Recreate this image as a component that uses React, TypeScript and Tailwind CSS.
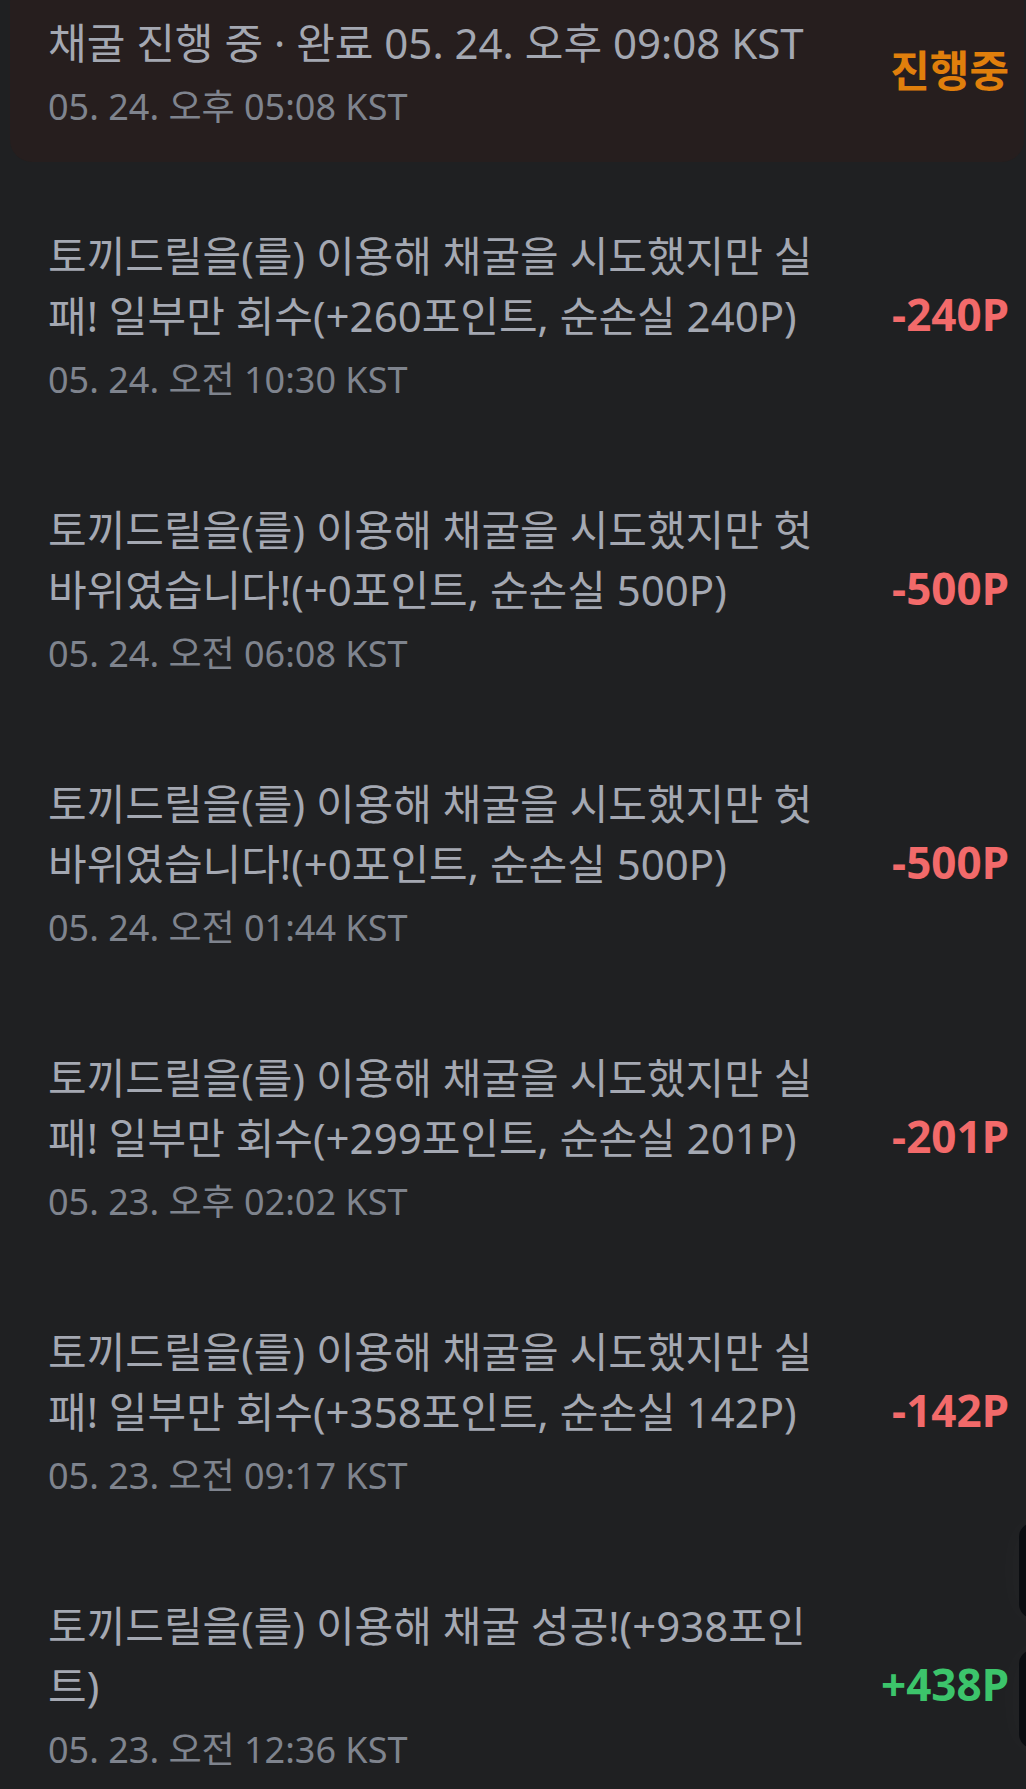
import React from 'react';

type Row = {
  id: number;
  text: string;
  date: string;
  amount: string;
  positive?: boolean;
};

const ROWS: Row[] = [
  { id: 1, text: '토끼드릴을(를) 이용해 채굴을 시도했지만 실패! 일부만 회수(+260포인트, 순손실 240P)', date: '05. 24. 오전 10:30 KST', amount: '-240P' },
  { id: 2, text: '토끼드릴을(를) 이용해 채굴을 시도했지만 헛바위였습니다!(+0포인트, 순손실 500P)', date: '05. 24. 오전 06:08 KST', amount: '-500P' },
  { id: 3, text: '토끼드릴을(를) 이용해 채굴을 시도했지만 헛바위였습니다!(+0포인트, 순손실 500P)', date: '05. 24. 오전 01:44 KST', amount: '-500P' },
  { id: 4, text: '토끼드릴을(를) 이용해 채굴을 시도했지만 실패! 일부만 회수(+299포인트, 순손실 201P)', date: '05. 23. 오후 02:02 KST', amount: '-201P' },
  { id: 5, text: '토끼드릴을(를) 이용해 채굴을 시도했지만 실패! 일부만 회수(+358포인트, 순손실 142P)', date: '05. 23. 오전 09:17 KST', amount: '-142P' },
  { id: 6, text: '토끼드릴을(를) 이용해 채굴 성공!(+938포인트)', date: '05. 23. 오전 12:36 KST', amount: '+438P', positive: true },
];

// latin glyphs from Noto Sans, hangul from the CJK face
const font = { fontFamily: '"Noto Sans", "Noto Sans CJK KR", sans-serif' };

export default function App() {
  return (
    <main
      className="relative w-[1026px] min-h-screen h-[1789px] overflow-hidden bg-[#1f2022]"
      style={font}
    >
      {/* Active mining card */}
      <div className="-mt-[20px] ml-[10px] mr-[2px] rounded-[22px] bg-[#261e1e] pt-[33px] pb-[33px] pl-[38px] pr-[15px] flex items-center">
        <div className="flex-1">
          <p className="text-[42px] leading-[60px] text-[#a4a8b2]">채굴 진행 중 · 완료 05. 24. 오후 09:08 KST</p>
          <p className="mt-[12px] text-[36px] leading-[44px] text-[#7f848e]">05. 24. 오후 05:08 KST</p>
        </div>
        <span className="text-[43px] font-bold text-[#e07f0c]">진행중</span>
      </div>

      {/* History */}
      <div className="mt-[15px]">
        {ROWS.map(row => (
          <div key={row.id} className="flex items-center pl-[48px] pr-[17px] py-[49px]">
            <div className="w-[792px]">
              <p className="text-[42px] leading-[60px] text-[#a4a8b2]">{row.text}</p>
              <p className="mt-[12px] text-[36px] leading-[44px] text-[#7f848e]">{row.date}</p>
            </div>
            <span
              className={
                row.positive
                  ? 'ml-auto text-[44px] font-bold text-[#3cc46b]'
                  : 'ml-auto text-[44px] font-bold text-[#f26a6a]'
              }
            >
              {row.amount}
            </span>
          </div>
        ))}
      </div>

      {/* Floating buttons, mostly off-screen */}
      <div className="absolute left-[1019px] top-[1523px] h-[95px] w-[60px] rounded-[14px] bg-[#0b0d11] shadow-[0_0_40px_rgba(255,255,255,0.03)]" />
      <div className="absolute left-[1019px] top-[1650px] h-[98px] w-[60px] rounded-[14px] bg-[#0b0d11] shadow-[0_0_40px_rgba(255,255,255,0.03)]" />
    </main>
  );
}
